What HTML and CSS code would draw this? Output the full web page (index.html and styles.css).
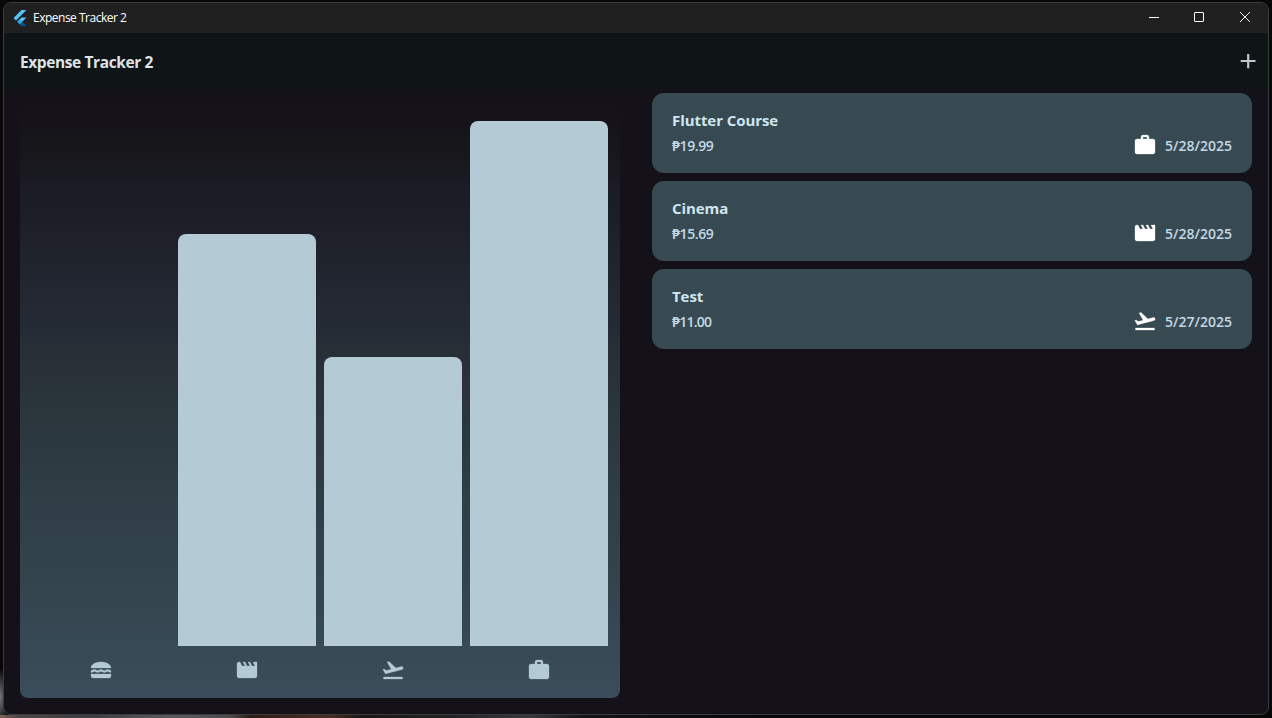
FILE: index.html
```html
<!DOCTYPE html>
<html lang="en">
<head>
<meta charset="utf-8">
<title>Expense Tracker 2</title>
<link rel="stylesheet" href="styles.css">
</head>
<body>
<svg class="sprite" aria-hidden="true">
  <symbol id="food" viewBox="0 0 24 24"><path d="M22 10c.32-3.28-4.28-6-9.99-6S1.7 6.72 2.02 10H22zM5.35 13.5c.55 0 .78.14 1.15.36.45.27 1.07.64 2.18.64s1.73-.37 2.18-.64c.37-.23.59-.36 1.15-.36.55 0 .78.14 1.15.36.45.27 1.07.64 2.18.64 1.11 0 1.73-.37 2.18-.64.37-.23.59-.36 1.15-.36.55 0 .78.14 1.15.36.45.27 1.07.63 2.17.64v-1.98c-.56 0-.79-.14-1.16-.36-.45-.27-1.07-.64-2.18-.64s-1.73.37-2.18.64c-.37.23-.6.36-1.15.36s-.78-.14-1.15-.36c-.45-.27-1.07-.64-2.18-.64s-1.73.37-2.18.64c-.37.23-.59.36-1.15.36-.55 0-.78-.14-1.15-.36-.45-.27-1.07-.64-2.18-.64-1.11 0-1.73.37-2.18.64-.37.23-.59.36-1.15.36v2c1.11 0 1.73-.37 2.21-.64.36-.23.59-.36 1.14-.36zM2 16v2c0 1.1.9 2 2 2h16c1.1 0 2-.9 2-2v-2H2z"/></symbol>
  <symbol id="leisure" viewBox="0 0 24 24"><path d="M18 4l2 4h-3l-2-4h-2l2 4h-3l-2-4H8l2 4H7L5 4H4c-1.1 0-1.99.9-1.99 2L2 18c0 1.1.9 2 2 2h16c1.1 0 2-.9 2-2V4h-4z"/></symbol>
  <symbol id="travel" viewBox="0 0 24 24"><path d="M2.5 19h19v2h-19zm19.57-9.36c-.21-.8-1.04-1.28-1.84-1.06L14.92 10l-6.9-6.43-1.93.51 4.14 7.17-4.97 1.33-1.97-1.54-1.45.39 1.82 3.16.77 1.33 1.6-.43 5.31-1.42 4.35-1.16L21 11.49c.81-.23 1.28-1.05 1.07-1.85z"/></symbol>
  <symbol id="work" viewBox="0 0 24 24"><path d="M20 6h-4V4c0-1.11-.89-2-2-2h-4c-1.11 0-2 .89-2 2v2H4c-1.11 0-1.99.89-1.99 2L2 19c0 1.11.89 2 2 2h16c1.11 0 2-.89 2-2V8c0-1.11-.89-2-2-2zm-6 0h-4V4h4v2z"/></symbol>
</svg>
<div class="window">
  <header class="titlebar">
    <svg class="logo" viewBox="0 0 24 24"><path fill="#54c5f8" d="M14.3 0 2.3 12l3.7 3.7L21.7 0zM14.3 11.1 7.9 17.5l3.7 3.7 10.1-10.1z"/><path fill="#01579b" d="m11.6 21.2 2.7 2.8h7.4l-6.4-6.5z"/><path fill="#29a4e8" d="m7.9 17.5 3.7-3.7 3.7 3.7-3.7 3.7z"/></svg>
    <span class="caption">Expense Tracker 2</span>
    <div class="controls">
      <svg viewBox="0 0 46 30"><path d="M19 14.5h10"/></svg>
      <svg viewBox="0 0 46 30"><rect x="18.5" y="9.5" width="9" height="9" rx="0.5"/></svg>
      <svg viewBox="0 0 46 30"><path d="m18 9 10 10M28 9 18 19"/></svg>
    </div>
  </header>
  <div class="appbar">
    <h1 class="heading">Expense Tracker 2</h1>
    <svg class="add" viewBox="0 0 24 24"><path d="M19.5 13h-6.2v6.2h-2.2V13H4.7v-2h6.4V5h2.2v6h6.2v2z"/></svg>
  </div>
  <main class="content">
    <section class="chart">
      <div class="bars">
        <div class="bar" style="height:0"></div>
        <div class="bar" style="height:78.49%"></div>
        <div class="bar" style="height:55.03%"></div>
        <div class="bar" style="height:100%"></div>
      </div>
      <div class="legend">
        <svg><use href="#food"/></svg>
        <svg><use href="#leisure"/></svg>
        <svg><use href="#travel"/></svg>
        <svg><use href="#work"/></svg>
      </div>
    </section>
    <section class="list">
      <article class="card">
        <h2 class="name">Flutter Course</h2>
        <div class="row"><span class="amount">₱19.99</span><svg><use href="#work"/></svg><span class="date">5/28/2025</span></div>
      </article>
      <article class="card">
        <h2 class="name">Cinema</h2>
        <div class="row"><span class="amount">₱15.69</span><svg><use href="#leisure"/></svg><span class="date">5/28/2025</span></div>
      </article>
      <article class="card">
        <h2 class="name">Test</h2>
        <div class="row"><span class="amount narrow">₱11.00</span><svg><use href="#travel"/></svg><span class="date">5/27/2025</span></div>
      </article>
    </section>
  </main>
</div>
</body>
</html>
```
FILE: styles.css
```css
* { box-sizing: border-box; }
body {
  margin: 0;
  width: 1272px;
  height: 718px;
  padding: 2px 3px 3px;
  overflow: hidden;
  background:
    radial-gradient(ellipse 9px 28px at 0 697px, #77787b, transparent),
    linear-gradient(90deg, #7b5c50, #4a4644 20px, #3d3d3e 90px, #5a5a5b 170px, #4c4c4c 230px, #2c1c18 250px, #4a2e25 330px, #1a1817 360px, #222 450px, #3a3a3a 530px, #151515 580px, #080808 760px) 0 715px / 100% 3px no-repeat,
    #080808;
  font-family: "Open Sans", "Noto Sans", sans-serif;
}
.sprite { display: none; }
svg { display: block; flex: none; }
h1, h2 { margin: 0; }
.window {
  height: 713px;
  display: flex;
  flex-direction: column;
  border: 1px solid #3b3b3c;
  border-radius: 8px;
  overflow: hidden;
  background: #141118;
}
.titlebar {
  height: 30px;
  flex: none;
  display: flex;
  align-items: center;
  background: #202020;
  color: #fff;
}
.logo { width: 16px; height: 16px; margin: -1px 0 0 8px; }
.caption { margin-left: 5px; font-size: 12px; line-height: 16px; letter-spacing: -0.5px; }
.controls { display: flex; margin-left: auto; }
.controls svg { width: 46px; height: 30px; fill: none; stroke: #fff; stroke-width: 1; }
.appbar {
  height: 56px;
  flex: none;
  display: flex;
  align-items: center;
  justify-content: space-between;
  padding: 0 8px 0 16px;
  background: #0f1416;
}
.heading { font-size: 15.5px; line-height: 24px; font-weight: 700; color: #dee3e6; letter-spacing: -0.4px; padding-top: 2px; }
.add { width: 24px; height: 24px; fill: #bfc8cc; }
.content { flex: 1; display: flex; gap: 32px; padding: 0 16px; }
.chart {
  width: 600px;
  margin: 16px 0;
  padding: 16px 8px;
  display: flex;
  flex-direction: column;
  border-radius: 8px;
  background: linear-gradient(180deg, #141118, #18181c 9%, #1a1b23 13%, #252b35 38%, #283137 44%, #2f3d45 65%, #34454f 83%, #3a4d5a);
}
.bars { height: 525px; display: flex; align-items: flex-end; padding: 0 4px; gap: 8px; }
.bar { flex: 1; background: #b4cad5; border-radius: 8px 8px 0 0; }
.legend { display: flex; margin-top: 12px; }
.legend svg { flex: 1; height: 24px; fill: #b4cad5; stroke: #b4cad5; stroke-width: 0.3; }
.list { width: 600px; padding-top: 4px; display: flex; flex-direction: column; gap: 8px; }
.card { height: 80px; padding: 15px 20px; border-radius: 12px; background: #374a52; }
.name { font-size: 15px; line-height: 24px; font-weight: 700; color: #cfe6f1; letter-spacing: -0.07px; }
.row { display: flex; align-items: center; height: 24px; margin-top: 1px; font-size: 14px; line-height: 20px; font-weight: 600; color: #c2d9e5; }
.row svg { width: 24px; height: 24px; fill: #fff; stroke: #fff; stroke-width: 0.3; margin: 0 8px 0 auto; }
.amount { letter-spacing: -0.4px; padding-top: 2px; }
.narrow { letter-spacing: -0.75px; }
.date { width: 67px; white-space: nowrap; padding-top: 2px; }
```
